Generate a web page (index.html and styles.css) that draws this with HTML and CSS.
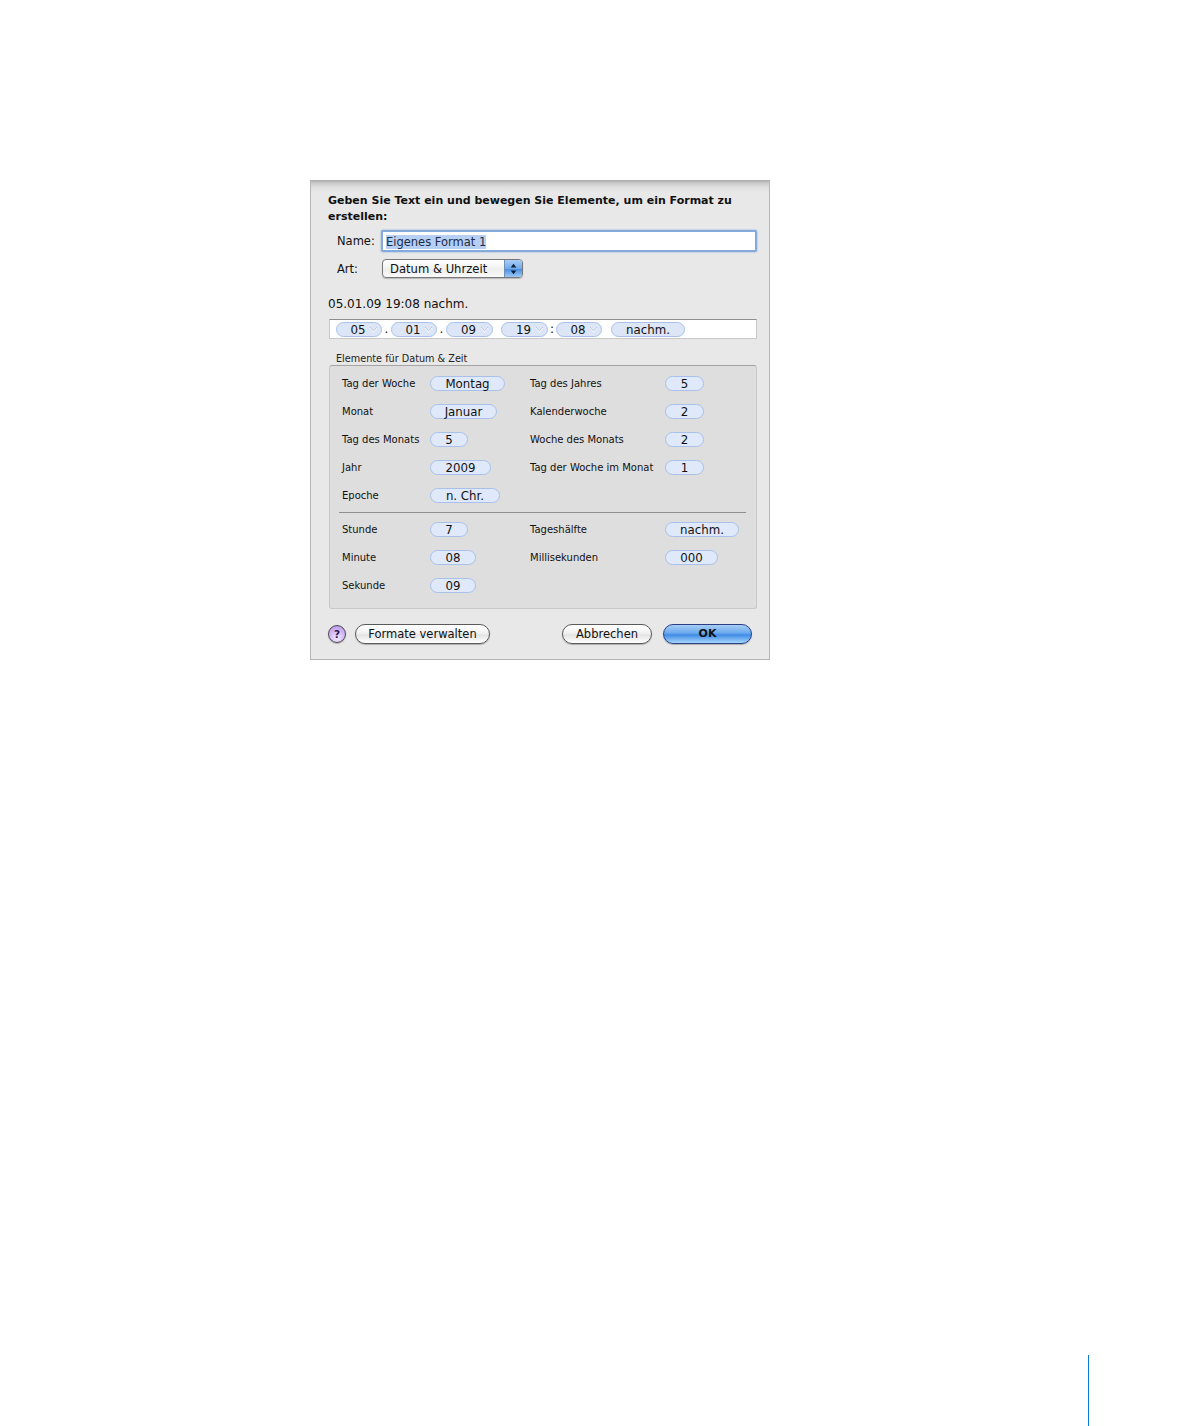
FILE: index.html
```html
<!DOCTYPE html>
<html lang="de">
<head>
<meta charset="utf-8">
<title>Eigenes Format</title>
<link rel="stylesheet" href="styles.css">
</head>
<body>
<main class="page">
  <section class="dialog">
    <h1 class="title">Geben Sie Text ein und bewegen Sie Elemente, um ein Format zu erstellen:</h1>
    <div class="name-row">
      <label class="field-label">Name:</label>
      <div class="input"><span class="selected">Eigenes Format 1</span></div>
    </div>
    <div class="art-row">
      <label class="field-label">Art:</label>
      <div class="select">
        <span class="select-text">Datum &amp; Uhrzeit</span>
        <span class="stepper">
          <svg width="18" height="18" viewBox="0 0 18 18"><path d="M9 3.5 12 7.5H6zM9 14.5 6 10.5H12z" fill="#10203c"/></svg>
        </span>
      </div>
    </div>
    <p class="preview">05.01.09 19:08 nachm.</p>
    <div class="tokens">
      <span class="pill token w46">05<svg class="chev" width="9" height="7" viewBox="0 0 9 7"><path d="M1 1.5 4.5 5.5 8 1.5" fill="none" stroke="#fff" stroke-width="1.2"/><path d="M1 1 4.5 5 8 1" fill="none" stroke="#a9b6cc" stroke-width=".8"/></svg></span>
      <span class="sep">.</span>
      <span class="pill token w46">01<svg class="chev" width="9" height="7" viewBox="0 0 9 7"><path d="M1 1.5 4.5 5.5 8 1.5" fill="none" stroke="#fff" stroke-width="1.2"/><path d="M1 1 4.5 5 8 1" fill="none" stroke="#a9b6cc" stroke-width=".8"/></svg></span>
      <span class="sep">.</span>
      <span class="pill token w47">09<svg class="chev" width="9" height="7" viewBox="0 0 9 7"><path d="M1 1.5 4.5 5.5 8 1.5" fill="none" stroke="#fff" stroke-width="1.2"/><path d="M1 1 4.5 5 8 1" fill="none" stroke="#a9b6cc" stroke-width=".8"/></svg></span>
      <span class="sep sep-narrow"></span>
      <span class="pill token w47">19<svg class="chev" width="9" height="7" viewBox="0 0 9 7"><path d="M1 1.5 4.5 5.5 8 1.5" fill="none" stroke="#fff" stroke-width="1.2"/><path d="M1 1 4.5 5 8 1" fill="none" stroke="#a9b6cc" stroke-width=".8"/></svg></span>
      <span class="sep sep-narrow">:</span>
      <span class="pill token w46">08<svg class="chev" width="9" height="7" viewBox="0 0 9 7"><path d="M1 1.5 4.5 5.5 8 1.5" fill="none" stroke="#fff" stroke-width="1.2"/><path d="M1 1 4.5 5 8 1" fill="none" stroke="#a9b6cc" stroke-width=".8"/></svg></span>
      <span class="sep"></span>
      <span class="pill w74">nachm.</span>
    </div>
    <div class="legend">Elemente für Datum &amp; Zeit</div>
    <div class="group">
      <div class="grid">
        <span class="lab">Tag der Woche</span><span class="pill w75">Montag</span>
        <span class="lab">Tag des Jahres</span><span class="pill w39">5</span>
        <span class="lab">Monat</span><span class="pill w67">Januar</span>
        <span class="lab">Kalenderwoche</span><span class="pill w39">2</span>
        <span class="lab">Tag des Monats</span><span class="pill w38">5</span>
        <span class="lab">Woche des Monats</span><span class="pill w39">2</span>
        <span class="lab">Jahr</span><span class="pill w61">2009</span>
        <span class="lab">Tag der Woche im Monat</span><span class="pill w39">1</span>
        <span class="lab">Epoche</span><span class="pill w70">n. Chr.</span>
      </div>
      <hr class="rule">
      <div class="grid">
        <span class="lab">Stunde</span><span class="pill w38">7</span>
        <span class="lab">Tageshälfte</span><span class="pill w74">nachm.</span>
        <span class="lab">Minute</span><span class="pill w46">08</span>
        <span class="lab">Millisekunden</span><span class="pill w53">000</span>
        <span class="lab">Sekunde</span><span class="pill w46">09</span>
      </div>
    </div>
    <div class="actions">
      <span class="help">?</span>
      <button class="btn btn-manage">Formate verwalten</button>
      <span class="spacer"></span>
      <button class="btn btn-cancel">Abbrechen</button>
      <button class="btn btn-ok">OK</button>
    </div>
  </section>
  <div class="page-rule"></div>
</main>
</body>
</html>
```
FILE: styles.css
```css
* { box-sizing: border-box; }
html, body { margin: 0; padding: 0; background: #fff; }
body { font-family: "DejaVu Sans", sans-serif; color: #111; }

.page {
  width: 1188px;
  height: 1426px;
  padding: 180px 0 0 310px;
  display: flex;
  flex-direction: column;
}

.dialog {
  width: 460px;
  height: 480px;
  padding: 13px 12px 0 17px;
  background: linear-gradient(#a9a9a9 0, #c9c9c9 3px, #dedede 7px, #e8e8e8 12px);
  border: 1px solid #b5b5b5;
  border-top: 0;
}

.title {
  margin: 0;
  width: 415px;
  font-size: 11px;
  line-height: 16px;
  font-weight: 700;
  color: #111;
}

.name-row { display: flex; align-items: center; margin-top: 5px; height: 22px; }
.art-row { display: flex; align-items: center; margin-top: 7px; height: 19px; }
.field-label { padding-left: 9px; flex: none; font-size: 11.5px; }
.name-row .field-label { width: 53px; }
.art-row .field-label { width: 54px; }

.input {
  width: 376px;
  height: 22px;
  padding: 3px 0 0 3px;
  background: #fff;
  border: 2px solid #84a9da;
  border-radius: 2px;
  box-shadow: 0 0 2px #7ea6d8;
  font-size: 11.5px;
  line-height: 14px;
}
.selected { display: inline-block; height: 14px; background: #b6cff2; color: #1c2c44; }

.select {
  width: 141px;
  height: 19px;
  display: flex;
  align-items: center;
  justify-content: space-between;
  padding-left: 7px;
  background: linear-gradient(#fff, #eee 60%, #fafafa);
  border: 1px solid #77777a;
  border-radius: 4px;
  box-shadow: 0 1px 1px rgba(0, 0, 0, .2);
  font-size: 11.6px;
  overflow: hidden;
}
.stepper {
  display: flex;
  width: 18px;
  height: 18px;
  background: linear-gradient(#a9cdf5, #6ea8ea 50%, #4b90e2 52%, #a8d0f8);
  border-left: 1px solid #6f8fb8;
}

.preview { margin: 19px 0 0; font-size: 12px; line-height: 15px; }

.tokens {
  display: flex;
  align-items: flex-start;
  margin: 7px 0 0 1px;
  width: 428px;
  height: 20px;
  padding: 2px 0 0 6px;
  background: #fff;
  border: 1px solid #c8c8c8;
  border-top: 1px solid #8e8e8e;
}
.sep { width: 9px; text-align: center; font-size: 12px; line-height: 15px; flex: none; }
.sep-narrow { width: 8px; }

.pill {
  display: flex;
  align-items: center;
  justify-content: center;
  height: 15px;
  padding-top: 1px;
  background: #e0e9f9;
  border: 1px solid #a9c1ea;
  border-radius: 8px;
  font-size: 11.8px;
  line-height: 13px;
  color: #111;
  flex: none;
  justify-self: start;
}
.tokens .pill { background: #dce6f7; }
.token { position: relative; padding-right: 2px; }
.chev { position: absolute; right: 3px; top: 3px; }

.w38 { width: 38px; }
.w39 { width: 39px; }
.w46 { width: 46px; }
.w47 { width: 47px; }
.w53 { width: 53px; }
.w61 { width: 61px; }
.w67 { width: 67px; }
.w70 { width: 70px; }
.w74 { width: 74px; }
.w75 { width: 75px; }

.legend { margin: 13px 0 0 8px; font-size: 9.7px; line-height: 13px; height: 13px; color: #222; }

.group {
  margin: 0 0 0 1px;
  width: 428px;
  height: 244px;
  padding: 10px 0 0 12px;
  background: #dedede;
  border: 1px solid #c8c8c8;
  border-top: 1px solid #a4a4a4;
  border-radius: 3px;
}

.grid {
  display: grid;
  grid-template-columns: 88px 100px 135px 1fr;
  grid-auto-rows: 15px;
  row-gap: 13px;
  align-items: center;
}
.lab { font-size: 10px; line-height: 15px; color: #111; white-space: nowrap; }

.rule {
  margin: 9px 0 9px -3px;
  width: 407px;
  height: 1px;
  border: 0;
  background: #8f8f8f;
}

.actions {
  display: flex;
  align-items: center;
  margin-top: 14px;
  height: 22px;
}
.help {
  width: 18px;
  height: 18px;
  flex: none;
  display: flex;
  align-items: center;
  justify-content: center;
  border: 1px solid #4b4b55;
  border-radius: 50%;
  background: radial-gradient(circle at 50% 75%, #f3e9ff, #c7a8ee 70%, #a98be0);
  font-size: 10.5px;
  font-weight: 700;
  color: #2b1a50;
  box-shadow: 0 1px 1px rgba(0, 0, 0, .25);
}
.btn {
  height: 20px;
  padding: 0;
  font-family: inherit;
  font-size: 11.5px;
  line-height: 16px;
  color: #111;
  border: 1px solid #5a5a5a;
  border-radius: 10px;
  background: linear-gradient(#fff, #f2f2f2 45%, #e4e4e4 55%, #fff);
  box-shadow: 0 1px 1px rgba(0, 0, 0, .25);
}
.btn-manage { width: 135px; margin-left: 9px; }
.spacer { width: 72px; flex: none; }
.btn-cancel { width: 90px; }
.btn-ok {
  width: 89px;
  margin-left: 11px;
  border-color: #2a3f86;
  font-size: 11px;
  font-weight: 700;
  background: linear-gradient(#a7cdf4, #6aa9ee 45%, #3f8be6 55%, #a5d6fb);
}

.page-rule {
  margin: auto 0 0 778px;
  width: 1px;
  height: 71px;
  background: #0b7ad6;
}
```
